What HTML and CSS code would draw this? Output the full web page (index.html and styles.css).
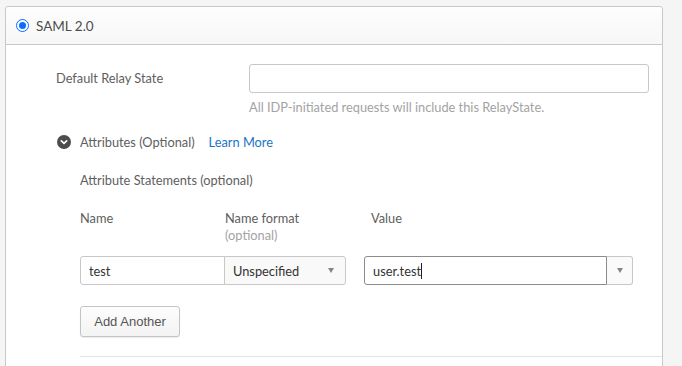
FILE: index.html
```html
<!doctype html>
<html lang="en">
  <head>
    <meta charset="UTF-8" />
    <title>SAML 2.0</title>
    <link rel="stylesheet" href="styles.css">
  </head>
  <body>
    <div class="page">
      <div class="card">
        <div class="cardHeader">
          <span class="radio"><span class="radioDot"></span></span>
          <span class="cardTitle">SAML 2.0</span>
        </div>
        <div class="cardBody">
          <div class="formRow">
            <label class="formLabel">Default Relay State</label>
            <div class="formField">
              <input class="textInput relayInput" type="text">
              <p class="help">All IDP-initiated requests will include this RelayState.</p>
            </div>
          </div>

          <div class="toggleRow">
            <span class="chevron">
              <svg width="14" height="14" viewBox="0 0 14 14">
                <circle cx="7" cy="7" r="7" fill="#4d4d4d"/>
                <path d="M4.3 5.8 L7 8.4 L9.7 5.8" fill="none" stroke="#fff" stroke-width="1.6" stroke-linecap="round" stroke-linejoin="round"/>
              </svg>
            </span>
            <span class="toggleText">Attributes (Optional)</span>
            <a class="learnMore" href="#">Learn More</a>
          </div>

          <div class="attributes">
            <div class="subTitle">Attribute Statements (optional)</div>

            <div class="colHeads">
              <div class="colName">Name</div>
              <div class="colFormat">Name format<span class="muted">(optional)</span></div>
              <div class="colValue">Value</div>
            </div>

            <div class="attrRow">
              <input class="textInput nameInput" type="text" value="test">
              <div class="select formatSelect">
                <span>Unspecified</span>
                <span class="caret"></span>
              </div>
              <div class="combo">
                <div class="comboInput">user.test<span class="cursor"></span></div>
                <div class="comboBtn"><span class="caret"></span></div>
              </div>
            </div>

            <button class="btn" type="button">Add Another</button>
            <div class="divider"></div>
          </div>
        </div>
      </div>
    </div>
  </body>
</html>
```

FILE: styles.css
```css
body {
  margin: 0;
  background: #f5f5f5;
  font-family: Lato, "Open Sans", sans-serif;
  font-size: 12.8px;
  color: #5e5e5e;
}

.page {
  padding: 6px 19px 0 5px;
  height: 360px;
  overflow: hidden;
}

.card {
  border: 1px solid #c8c8c8;
  border-radius: 3px;
  background: #fff;
  height: 400px;
}

.cardHeader {
  display: flex;
  align-items: center;
  height: 37px;
  padding-left: 10px;
  background: linear-gradient(#fdfdfd, #f7f7f7);
  border-bottom: 1px solid #c8c8c8;
  border-radius: 3px 3px 0 0;
}

.radio {
  width: 13px;
  height: 13px;
  border: 1.5px solid #0a6cff;
  border-radius: 50%;
  display: flex;
  align-items: center;
  justify-content: center;
  box-sizing: border-box;
  background: #fff;
}
.radioDot {
  width: 7px;
  height: 7px;
  border-radius: 50%;
  background: #0a6cff;
}
.cardTitle {
  margin-left: 7px;
  font-size: 13.5px;
  color: #4d4d4d;
}

.cardBody {
  padding: 19px 0 0 50px;
}

.formRow {
  display: flex;
}
.formLabel {
  width: 193px;
  padding-top: 6px;
  line-height: 16px;
}
.textInput {
  font-family: inherit;
  font-size: 12.8px;
  color: #333;
  box-sizing: border-box;
  border: 1px solid #c8c8c8;
  border-radius: 3px;
  height: 29px;
  padding: 0 8px;
  outline: none;
  margin: 0;
}
.relayInput {
  width: 400px;
}
.help {
  margin: 6px 0 0;
  line-height: 16px;
  color: #a3a3a3;
}

.toggleRow {
  display: flex;
  align-items: center;
  margin-top: 19px;
  height: 16px;
}
.chevron {
  display: flex;
  margin-left: 1px;
}
.toggleText {
  margin-left: 9px;
}
.learnMore {
  margin-left: 14px;
  color: #1c74c4;
  text-decoration: none;
}

.attributes {
  padding-left: 24px;
}
.subTitle {
  margin-top: 22px;
  line-height: 16px;
}

.colHeads {
  display: flex;
  margin-top: 22px;
  line-height: 17px;
}
.colName {
  width: 145px;
}
.colFormat {
  width: 146px;
}
.colFormat .muted {
  display: block;
  color: #a3a3a3;
}

.attrRow {
  display: flex;
  margin-top: 12px;
}
.nameInput {
  width: 145px;
  border-radius: 3px 0 0 3px;
  padding-left: 8px;
}
.select {
  display: flex;
  align-items: center;
  justify-content: space-between;
  box-sizing: border-box;
  height: 29px;
  border: 1px solid #c8c8c8;
  background: #f9f9f9;
  color: #333;
}
.formatSelect {
  width: 122px;
  margin-left: -1px;
  padding: 0 11px 0 8px;
  border-radius: 0 3px 3px 0;
}
.caret {
  width: 0;
  height: 0;
  border-left: 3.5px solid transparent;
  border-right: 3.5px solid transparent;
  border-top: 5px solid #858585;
}

.combo {
  display: flex;
  margin-left: 18px;
}
.comboInput {
  box-sizing: border-box;
  width: 243px;
  height: 29px;
  border: 1px solid #8c8c8c;
  border-radius: 3px 0 0 3px;
  padding: 0 8px;
  display: flex;
  align-items: center;
  color: #333;
}
.cursor {
  display: inline-block;
  width: 1px;
  height: 16px;
  background: #222;
}
.comboBtn {
  box-sizing: border-box;
  width: 26px;
  height: 29px;
  border: 1px solid #c8c8c8;
  border-left: none;
  border-radius: 0 3px 3px 0;
  background: #fafafa;
  display: flex;
  align-items: center;
  justify-content: center;
}

.btn {
  display: block;
  margin-top: 21px;
  width: 100px;
  height: 31px;
  border: 1px solid #c4c4c4;
  border-radius: 3px;
  background: linear-gradient(#fdfdfd, #f3f3f3);
  box-shadow: 0 1px 1px rgba(0, 0, 0, .08);
  font-family: "Liberation Sans", Arial, sans-serif;
  font-size: 13px;
  color: #555;
  padding: 0;
}

.divider {
  margin-top: 19px;
  border-top: 1px solid #e3e3e3;
}
```
